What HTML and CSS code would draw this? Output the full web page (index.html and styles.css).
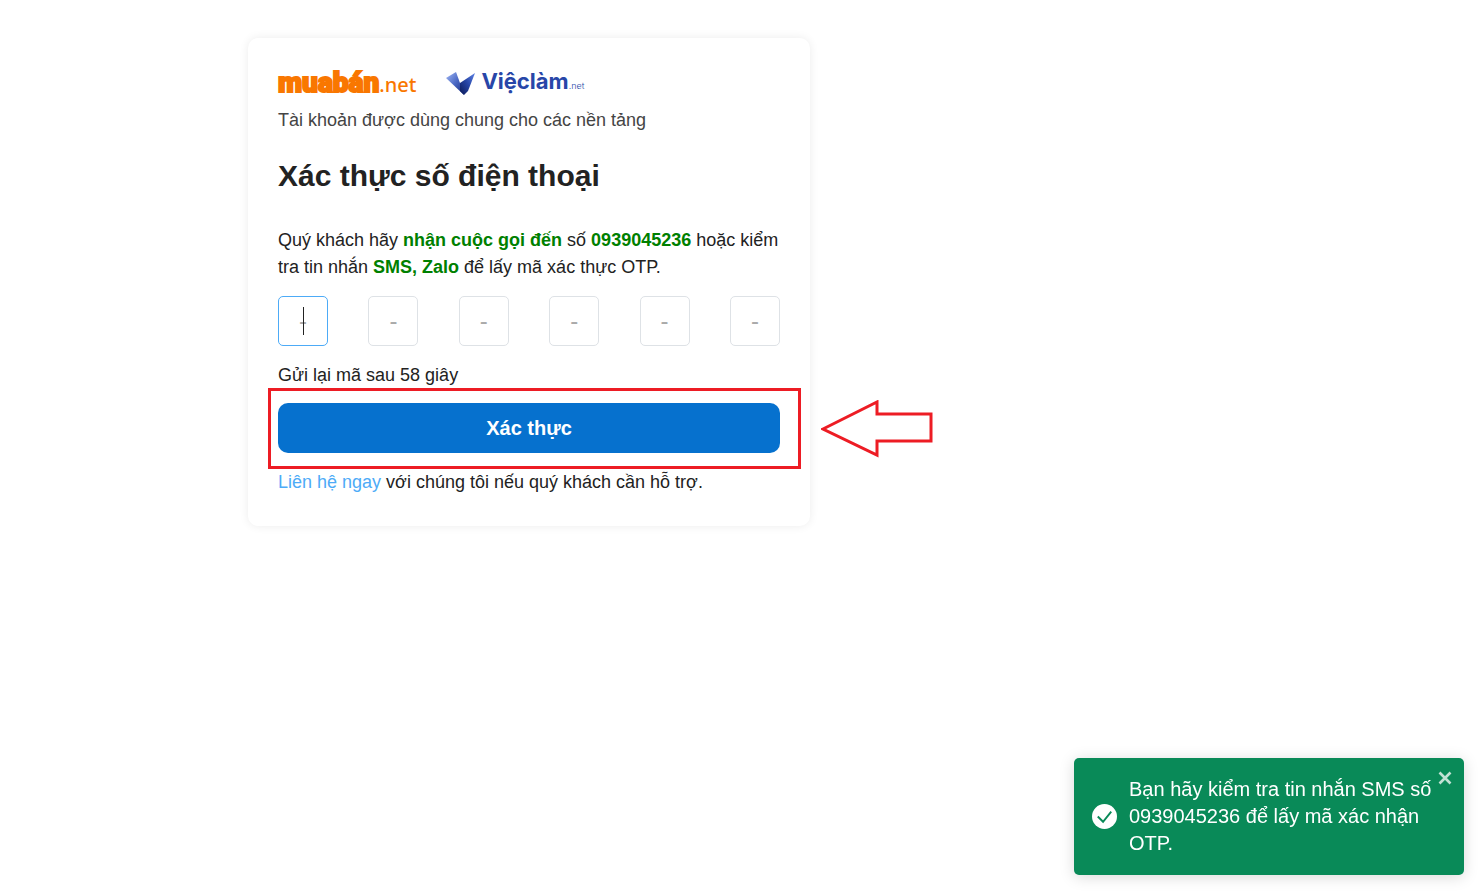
FILE: index.html
```html
<!DOCTYPE html>
<html lang="vi">
<head>
    <meta charset="UTF-8">
    <meta name="viewport" content="width=device-width, initial-scale=1.0">
    <title>Xác thực số điện thoại</title>
    <link rel="stylesheet" href="styles.css">
</head>
<body>
    <main class="page">
        <form class="card">
            <div class="logos">
                <a href="#" class="logo-muaban"><span class="muaban-name">muabán</span><span class="muaban-net">.net</span></a>
                <a href="#" class="logo-vieclam">
                    <svg class="vieclam-mark" viewBox="0 0 29 24" aria-hidden="true">
                        <defs>
                            <linearGradient id="wingLeft" x1="0" y1="0" x2="1" y2="1">
                                <stop offset="0" stop-color="#a3b9f5"/>
                                <stop offset="0.5" stop-color="#4a68c4"/>
                                <stop offset="1" stop-color="#14287a"/>
                            </linearGradient>
                            <linearGradient id="wingRight" x1="1" y1="0" x2="0" y2="1">
                                <stop offset="0" stop-color="#5d82e6"/>
                                <stop offset="0.5" stop-color="#2644a4"/>
                                <stop offset="1" stop-color="#0c1a56"/>
                            </linearGradient>
                        </defs>
                        <path d="M0 6 10 0 14 11 18 23Z" fill="url(#wingLeft)"/>
                        <path d="M29 1 14 11 14 19 18 23 22 19Z" fill="url(#wingRight)"/>
                    </svg>
                    <span class="vieclam-name">Việclàm</span><span class="vieclam-net">.net</span>
                </a>
            </div>
            <p class="tagline">Tài khoản được dùng chung cho các nền tảng</p>

            <h1>Xác thực số điện thoại</h1>

            <p class="guide">Quý khách hãy <strong>nhận cuộc gọi đến</strong> số <strong>0939045236</strong> hoặc kiểm tra tin nhắn <strong>SMS, Zalo</strong> để lấy mã xác thực OTP.</p>

            <div class="otp">
                <div class="otp-cell">
                    <input class="otp-input active" type="text" maxlength="1" placeholder="-" aria-label="Số thứ 1">
                    <span class="caret"></span>
                </div>
                <input class="otp-input" type="text" maxlength="1" placeholder="-" aria-label="Số thứ 2">
                <input class="otp-input" type="text" maxlength="1" placeholder="-" aria-label="Số thứ 3">
                <input class="otp-input" type="text" maxlength="1" placeholder="-" aria-label="Số thứ 4">
                <input class="otp-input" type="text" maxlength="1" placeholder="-" aria-label="Số thứ 5">
                <input class="otp-input" type="text" maxlength="1" placeholder="-" aria-label="Số thứ 6">
            </div>

            <p class="resend">Gửi lại mã sau 58 giây</p>

            <div class="submit">
                <button type="button" class="button">Xác thực</button>
                <div class="highlight"></div>
                <svg class="arrow" viewBox="0 0 112 58" aria-hidden="true">
                    <path d="M2 29 56 2V14H110V41H56V55Z" fill="none" stroke="#ed1c24" stroke-width="3"/>
                </svg>
            </div>

            <p class="contact"><a href="#">Liên hệ ngay</a> với chúng tôi nếu quý khách cần hỗ trợ.</p>
        </form>
    </main>

    <div class="toast" role="status">
        <svg class="toast-icon" viewBox="0 0 26 26" aria-hidden="true">
            <circle cx="13" cy="13" r="13" fill="#fff"/>
            <path d="M6 13 11.5 18.5 20 8" fill="none" stroke="#098a58" stroke-width="2"/>
        </svg>
        <p class="toast-text">Bạn hãy kiểm tra tin nhắn SMS số 0939045236 để lấy mã xác nhận OTP.</p>
        <button type="button" class="toast-close" aria-label="Đóng">
            <svg viewBox="0 0 14 14" aria-hidden="true">
                <path d="M1.5 1.5 12.5 12.5M12.5 1.5 1.5 12.5" stroke="currentColor" stroke-width="2.6"/>
            </svg>
        </button>
    </div>
</body>
</html>
```
FILE: styles.css
```css
* {
    box-sizing: border-box;
}
body {
    margin: 0;
    font-family: "Liberation Sans", Arial, sans-serif;
    font-size: 18px;
    line-height: 27px;
    color: #222;
    background-color: #fff;
}
h1, p {
    margin: 0;
}
a {
    color: #4dabf7;
    text-decoration: none;
}
.page {
    max-width: 983px;
    margin: 0 auto;
    padding: 38px 0;
}
.card {
    max-width: 562px;
    padding: 30px;
    border-radius: 10px;
    background-color: #fff;
    box-shadow: 0 0 10px rgba(0, 0, 0, 0.08);
}
.logos {
    display: flex;
    align-items: center;
    gap: 30px;
    height: 39px;
    padding-bottom: 8px;
}
.logo-muaban {
    display: flex;
    align-items: baseline;
    color: #f97700;
}
.muaban-name {
    font-family: Roboto, sans-serif;
    font-size: 28px;
    font-weight: 900;
    -webkit-text-stroke: 2px #f97700;
}
.muaban-net {
    font-family: "Noto Sans", sans-serif;
    font-size: 20px;
    font-weight: 500;
}
.logo-vieclam {
    display: flex;
    align-items: baseline;
    color: #2846a8;
    font-family: Inter, sans-serif;
}
.vieclam-mark {
    align-self: center;
    width: 29px;
    height: 24px;
    margin-right: 6px;
}
.vieclam-name {
    font-size: 22px;
    font-weight: 700;
}
.vieclam-net {
    font-size: 9px;
    font-weight: 300;
}
.tagline {
    color: #444;
}
h1 {
    margin: 18px 0 27px;
    font-size: 30px;
    line-height: 48px;
}
.guide strong {
    color: #008000;
}
.otp {
    display: flex;
    justify-content: space-between;
    margin: 15px 0 16px;
}
.otp-cell {
    position: relative;
    display: flex;
}
.otp-input {
    width: 50px;
    height: 50px;
    padding: 0;
    border: 1px solid #dee2e6;
    border-radius: 5px;
    background-color: #fff;
    font: inherit;
    font-size: 24px;
    text-align: center;
    outline: none;
}
.otp-input::placeholder {
    color: #aaa;
}
.otp-input.active {
    border-color: #4dabf7;
}
.caret {
    position: absolute;
    top: 11px;
    left: 25px;
    width: 1px;
    height: 28px;
    background-color: #222;
}
.submit {
    position: relative;
    margin: 14px 0 16px;
}
.button {
    display: block;
    width: 100%;
    height: 50px;
    border: 0;
    border-radius: 10px;
    background-color: #0671ce;
    color: #fff;
    font: inherit;
    font-size: 20px;
    font-weight: bold;
    cursor: pointer;
}
.highlight {
    position: absolute;
    top: -15px;
    right: -21px;
    bottom: -16px;
    left: -10px;
    border: 3px solid #ed1c24;
    pointer-events: none;
}
.arrow {
    position: absolute;
    top: -3px;
    left: calc(100% + 41px);
    width: 112px;
    height: 58px;
}
.toast {
    position: fixed;
    right: 15px;
    bottom: 21px;
    display: flex;
    align-items: center;
    gap: 12px;
    width: 390px;
    padding: 18px 30px 18px 18px;
    border-radius: 5px;
    background-color: #098a58;
    color: #fff;
    box-shadow: 0 2px 15px rgba(0, 0, 0, 0.15);
}
.toast-icon {
    flex: none;
    width: 25px;
    height: 25px;
}
.toast-text {
    font-size: 20px;
}
.toast-close {
    position: absolute;
    top: 13px;
    right: 12px;
    display: flex;
    width: 14px;
    height: 14px;
    padding: 0;
    border: 0;
    background: none;
    color: rgba(255, 255, 255, 0.75);
    cursor: pointer;
}
```
